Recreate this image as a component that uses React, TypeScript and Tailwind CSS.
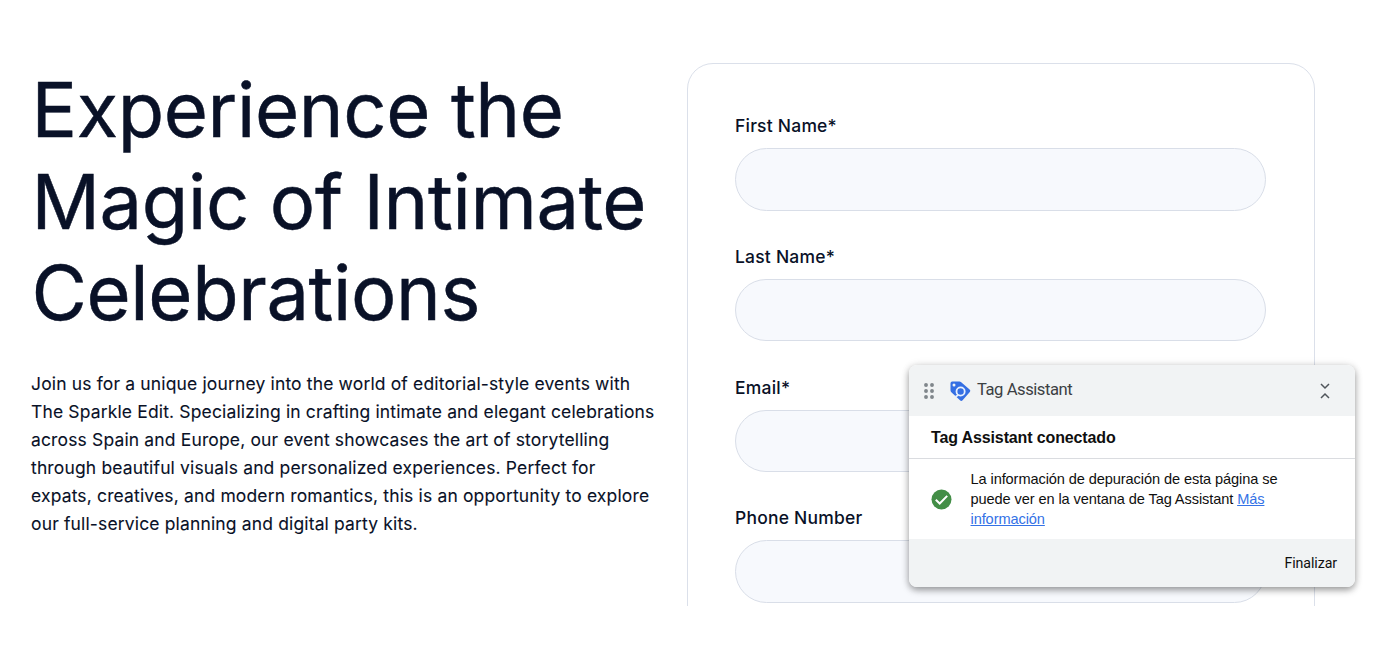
const fields = ['First Name*', 'Last Name*', 'Email*', 'Phone Number'];

function TagAssistant() {
  return (
    <aside className="absolute left-[909px] top-[365px] w-[446px] h-[222px] flex flex-col overflow-hidden rounded-lg bg-white font-['Liberation_Sans',sans-serif] text-[#0f0f0f] shadow-[0_3px_7px_rgba(0,0,0,0.38),0_0_10px_rgba(0,0,0,0.08)]">
      <header className="h-[51px] shrink-0 flex items-center bg-[#f1f3f4] pl-[14px] pr-5 text-[#3c4043]">
        <svg className="w-3 h-[18px] mt-px" viewBox="0 0 12 18" fill="#80868b">
          <circle cx="3" cy="3" r="1.95" />
          <circle cx="9" cy="3" r="1.95" />
          <circle cx="3" cy="9" r="1.95" />
          <circle cx="9" cy="9" r="1.95" />
          <circle cx="3" cy="15" r="1.95" />
          <circle cx="9" cy="15" r="1.95" />
        </svg>
        <svg className="ml-[15px] mt-px w-[21px] h-[21px]" viewBox="0 0 21 21">
          <path
            d="M2.2 0.5H9.4Q10.4 0.5 11.2 1.2L19.6 8.4Q21 9.7 19.8 11.1L12.6 19.2Q11.3 20.6 10 19.3L1.6 11.4Q0.5 10.4 0.5 9.2V2.2Q0.5 0.5 2.2 0.5Z"
            fill="#356fe3"
          />
          <circle cx="4" cy="4" r="1.5" fill="#f1f3f4" />
          <circle cx="10.6" cy="10.5" r="4.1" fill="none" stroke="#e8f0fe" strokeWidth="1.8" />
          <path d="M8 14.2L5.4 15.8" stroke="#e8f0fe" strokeWidth="1.6" />
        </svg>
        <span className="ml-[6px] -mt-0.5 text-[16.6px] leading-5 tracking-[-0.45px] font-['Roboto',sans-serif]">Tag Assistant</span>
        <svg className="ml-auto mr-[5px] mt-px w-[10px] h-4" viewBox="0 0 10 16" fill="none" stroke="#50555a" strokeWidth="1.5">
          <path d="M1 1L5 5L9 1" />
          <path d="M1 15L5 11L9 15" />
        </svg>
      </header>
      <h2 className="h-[43px] shrink-0 flex items-center border-b border-[#dadce0] pl-[22px] pt-0.5 text-[16px] tracking-[-0.13px] font-bold">
        Tag Assistant conectado
      </h2>
      <div className="flex-1 flex items-center pl-[22px]">
        <svg className="w-[21px] h-[21px] shrink-0" viewBox="0 0 21 21">
          <circle cx="10.5" cy="10.5" r="10" fill="#438e47" />
          <path d="M4.8 10.7L8.7 14.5L16.2 6.9" fill="none" stroke="white" strokeWidth="2" />
        </svg>
        <p className="ml-[18.5px] w-[330px] text-[14.6px] leading-5 tracking-[-0.1px]">
          La información de depuración de esta página se
          <br />
          puede ver en la ventana de Tag Assistant{' '}
          <a href="#" className="text-[#3472e6] underline">
            Más
            <br />
            información
          </a>
        </p>
      </div>
      <footer className="h-[48px] shrink-0 flex items-center justify-end bg-[#f1f3f4] pr-[18px]">
        <button className="-mt-px text-[14.2px] leading-5 tracking-[-0.08px] font-['Roboto',sans-serif]">Finalizar</button>
      </footer>
    </aside>
  );
}

export default function App() {
  return (
    <main className="relative h-[670px] overflow-hidden bg-white font-['Inter',sans-serif] text-[#091127]">
      <section className="flex h-[606px] items-start overflow-hidden pl-[31px] pt-[63px]">
        <div className="w-[655.5px] shrink-0 pt-px">
          <h1 className="pl-[0.5px] text-[75.8px] leading-[91.7px] tracking-[-0.36px] font-normal [-webkit-text-stroke:0.5px_#091127]">
            Experience the
            <br />
            Magic of Intimate
            <br />
            Celebrations
          </h1>
          <p className="mt-[31px] text-[17.47px] leading-[27.95px] tracking-[0.17px] [-webkit-text-stroke:0.1px_#091127]">
            Join us for a unique journey into the world of editorial-style events with
            <br />
            The Sparkle Edit. Specializing in crafting intimate and elegant celebrations
            <br />
            across Spain and Europe, our event showcases the art of storytelling
            <br />
            through beautiful visuals and personalized experiences. Perfect for
            <br />
            expats, creatives, and modern romantics, this is an opportunity to explore
            <br />
            our full-service planning and digital party kits.
          </p>
        </div>
        <form className="w-[628px] h-[700px] shrink-0 flex flex-col gap-[31.2px] rounded-[26px] border border-[#dbe0ea] px-[47.5px] pt-[48px]">
          {fields.map((label) => (
            <label key={label} className="flex flex-col gap-2 text-[17.47px] leading-[28px] tracking-[0.23px] font-medium">
              {label}
              <input
                type="text"
                className="mb-px h-[62.6px] w-full rounded-full border border-[#d9dee8] bg-[#f7f9fd] px-6 outline-none"
              />
            </label>
          ))}
        </form>
      </section>
      <TagAssistant />
    </main>
  );
}
